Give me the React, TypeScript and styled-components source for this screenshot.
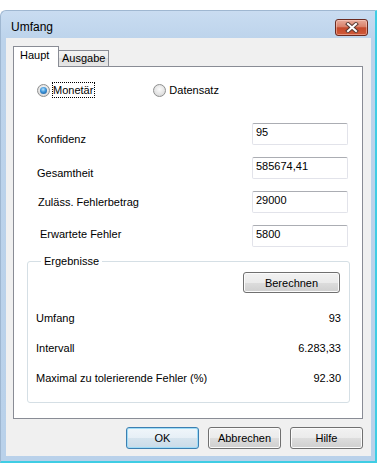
import { Fragment } from 'react';
import styled, { createGlobalStyle } from 'styled-components';

const GlobalStyle = createGlobalStyle`
  html, body {
    margin: 0;
    padding: 0;
    background: #fff;
  }
  body {
    font-family: "Liberation Sans", Arial, sans-serif;
    font-size: 11px;
    color: #000;
  }
  * {
    box-sizing: border-box;
  }
`;

const Desktop = styled.div`
  width: 377px;
  height: 463px;
  padding-top: 10px;
  background: #fff;
`;

const Window = styled.div`
  width: 377px;
  height: 453px;
  display: flex;
  flex-direction: column;
  padding: 0 4px 5px 5px;
  border-top: 1px solid #9fb7d1;
  border-left: 1px solid #9fb7d1;
  border-right: 2px solid #3fcde4;
  border-bottom: 2px solid #3fcde4;
  border-top-left-radius: 6px;
  background: linear-gradient(to bottom, #c9dcf1 0, #bcd3eb 30px, #b9d1ea 100%);
`;

const TitleBar = styled.div`
  height: 27px;
  display: flex;
  align-items: center;
  justify-content: space-between;
  padding: 5px 3px 0 5px;
`;

const Title = styled.span`
  font-size: 12px;
  line-height: 15px;
  color: #000;
`;

const CloseButton = styled.div`
  width: 33px;
  height: 17px;
  display: flex;
  align-items: center;
  justify-content: center;
  border: 1px solid #6b2b21;
  border-radius: 3px;
  background: linear-gradient(to bottom, #e8ab9b 0, #d8816b 45%, #c4492c 52%, #cf5a3a 100%);
  box-shadow: inset 0 0 0 1px rgba(255, 220, 210, 0.45);
`;

const Client = styled.div`
  height: 418px;
  display: flex;
  flex-direction: column;
  padding: 8px 8px 7px 7px;
  background: #f0f0f0;
`;

const TabStrip = styled.div`
  height: 20px;
  display: flex;
  align-items: flex-end;
  position: relative;
  z-index: 1;
`;

const Tab = styled.div<{ $active?: boolean }>`
  border: 1px solid #898c95;
  line-height: 14px;
  ${({ $active }) =>
    $active
      ? `
    width: 46px;
    height: 21px;
    margin-bottom: -1px;
    padding: 1px 0 0 6px;
    border-bottom: none;
    background: #fff;
    z-index: 2;
  `
      : `
    width: 51px;
    height: 16px;
    margin-left: -1px;
    padding: 0 0 0 3px;
    border-bottom: none;
    background: linear-gradient(to bottom, #f3f3f3 0, #ebebeb 50%, #dedede 50%, #e6e6e6 100%);
  `}
`;

const Panel = styled.div`
  height: 353px;
  display: flex;
  flex-direction: column;
  padding-top: 15px;
  border: 1px solid #898c95;
  background: #fff;
`;

const RadioRow = styled.div`
  height: 16px;
  display: flex;
  align-items: center;
  padding-left: 23px;
`;

const RadioItem = styled.label<{ $gap?: number }>`
  display: flex;
  align-items: center;
  gap: 2px;
  margin-left: ${({ $gap }) => $gap ?? 0}px;
`;

const RadioCircle = styled.span<{ $checked?: boolean }>`
  width: 13px;
  height: 13px;
  border-radius: 50%;
  border: 1px solid #8e8f8f;
  background: radial-gradient(circle at 50% 40%, #fbfbfb 0, #e2e2e2 60%, #cfcfcf 100%);
  display: flex;
  align-items: center;
  justify-content: center;

  &::after {
    content: '';
    width: 7px;
    height: 7px;
    border-radius: 50%;
    background: radial-gradient(circle at 45% 35%, #b4e2ff 0, #3b93d8 45%, #1b4f8c 100%);
    display: ${({ $checked }) => ($checked ? 'block' : 'none')};
  }
`;

const RadioText = styled.span<{ $focused?: boolean }>`
  line-height: 14px;
  padding-right: 1px;
  border: 1px ${({ $focused }) => ($focused ? 'dotted #000' : 'solid transparent')};
`;

const Form = styled.div`
  display: grid;
  grid-template-columns: 1fr 96px;
  grid-auto-rows: 22px;
  row-gap: 12px;
  margin-top: 25px;
  padding: 0 14px 0 23px;
`;

const FieldLabel = styled.span<{ $top: number; $indent?: number }>`
  align-self: start;
  line-height: 14px;
  margin-top: ${({ $top }) => $top}px;
  margin-left: ${({ $indent }) => $indent ?? 0}px;
`;

const TextInput = styled.input`
  width: 96px;
  height: 22px;
  margin: 0;
  padding: 1px 3px 5px;
  border: 1px solid #e2e3ea;
  border-top-color: #abadb3;
  border-radius: 2px;
  background: #fff;
  font-family: inherit;
  font-size: 11px;
  color: #000;
  outline: none;
`;

const GroupBox = styled.fieldset`
  margin: 7px 12px 0 13px;
  padding: 0 8px 17px;
  min-width: 0;
  border: 1px solid #d5dfe5;
  border-radius: 3px;
`;

const GroupTitle = styled.legend`
  margin-left: 5px;
  padding: 0 3px;
  line-height: 14px;
`;

const GroupActions = styled.div`
  display: flex;
  justify-content: flex-end;
  margin-top: 4px;
  padding-right: 1px;
`;

const Results = styled.div`
  display: grid;
  row-gap: 16px;
  margin-top: 18px;
`;

const ResultRow = styled.div`
  display: flex;
  justify-content: space-between;
  line-height: 14px;
`;

const Button = styled.button<{ $width: number; $height: number; $default?: boolean }>`
  width: ${({ $width }) => $width}px;
  height: ${({ $height }) => $height}px;
  margin: 0;
  padding: 0;
  border: 1px solid ${({ $default }) => ($default ? '#3c7fb1' : '#707070')};
  border-radius: 3px;
  background: ${({ $default }) =>
    $default
      ? 'linear-gradient(to bottom, #f0f6fa 0, #e6eff6 50%, #d6e4ee 50%, #cadbe8 100%)'
      : 'linear-gradient(to bottom, #f2f2f2 0, #ebebeb 50%, #dddddd 50%, #cfcfcf 100%)'};
  box-shadow: inset 0 0 0 1px ${({ $default }) => ($default ? '#9fdcf7' : '#fbfbfb')};
  font-family: inherit;
  font-size: 11px;
  color: #000;
`;

const ButtonBar = styled.div`
  display: flex;
  justify-content: flex-end;
  gap: 9px;
  margin-top: 8px;
`;

const fields = [
  { label: 'Konfidenz', value: '95', top: 9, indent: 0 },
  { label: 'Gesamtheit', value: '585674,41', top: 9, indent: 0 },
  { label: 'Zuläss. Fehlerbetrag', value: '29000', top: 4, indent: 1 },
  { label: 'Erwartete Fehler', value: '5800', top: 2, indent: 3 },
];

const results = [
  { label: 'Umfang', value: '93' },
  { label: 'Intervall', value: '6.283,33' },
  { label: 'Maximal zu tolerierende Fehler (%)', value: '92.30' },
];

const CloseGlyph = () => (
  <svg width="14" height="11" viewBox="0 0 14 11">
    <path d="M3 2 L11 9 M11 2 L3 9" stroke="#5a3a34" strokeWidth="4" strokeLinecap="square" />
    <path d="M3 2 L11 9 M11 2 L3 9" stroke="#fff" strokeWidth="2" strokeLinecap="square" />
  </svg>
);

export default function App() {
  return (
    <>
      <GlobalStyle />
      <Desktop>
        <Window>
          <TitleBar>
            <Title>Umfang</Title>
            <CloseButton>
              <CloseGlyph />
            </CloseButton>
          </TitleBar>
          <Client>
            <TabStrip>
              <Tab $active>Haupt</Tab>
              <Tab>Ausgabe</Tab>
            </TabStrip>
            <Panel>
              <RadioRow>
                <RadioItem>
                  <RadioCircle $checked />
                  <RadioText $focused>Monetär</RadioText>
                </RadioItem>
                <RadioItem $gap={58}>
                  <RadioCircle />
                  <RadioText>Datensatz</RadioText>
                </RadioItem>
              </RadioRow>
              <Form>
                {fields.map((f) => (
                  <Fragment key={f.label}>
                    <FieldLabel $top={f.top} $indent={f.indent}>
                      {f.label}
                    </FieldLabel>
                    <TextInput readOnly defaultValue={f.value} />
                  </Fragment>
                ))}
              </Form>
              <GroupBox>
                <GroupTitle>Ergebnisse</GroupTitle>
                <GroupActions>
                  <Button $width={97} $height={21}>
                    Berechnen
                  </Button>
                </GroupActions>
                <Results>
                  {results.map((r) => (
                    <ResultRow key={r.label}>
                      <span>{r.label}</span>
                      <span>{r.value}</span>
                    </ResultRow>
                  ))}
                </Results>
              </GroupBox>
            </Panel>
            <ButtonBar>
              <Button $width={73} $height={22} $default>
                OK
              </Button>
              <Button $width={73} $height={22}>
                Abbrechen
              </Button>
              <Button $width={73} $height={22}>
                Hilfe
              </Button>
            </ButtonBar>
          </Client>
        </Window>
      </Desktop>
    </>
  );
}
